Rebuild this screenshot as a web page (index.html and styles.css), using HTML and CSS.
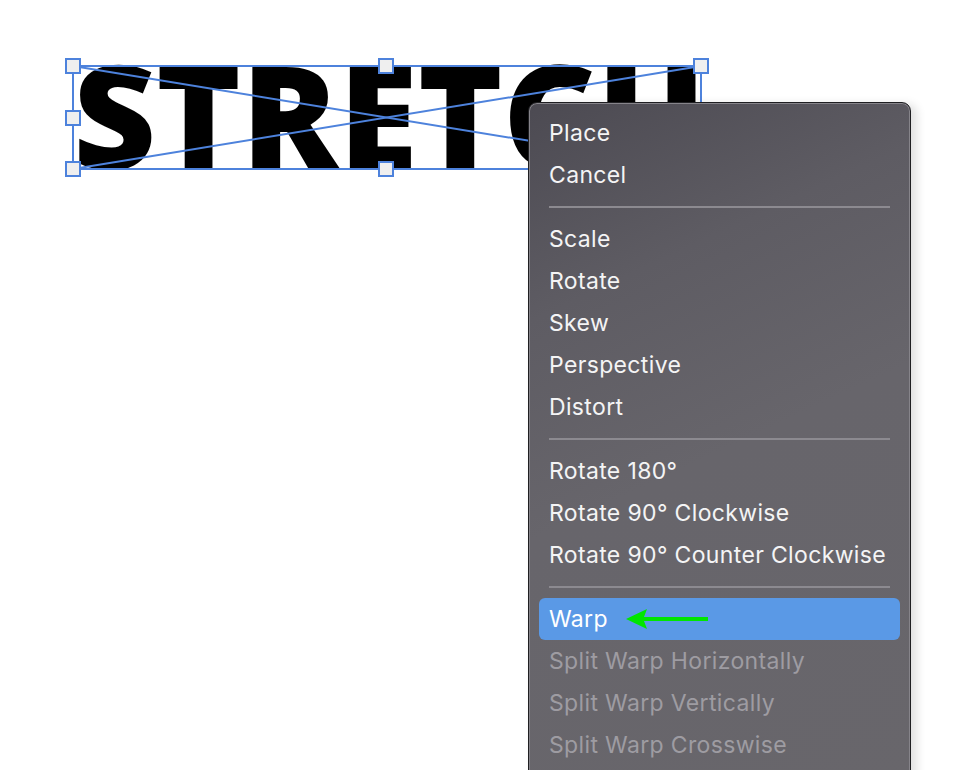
FILE: index.html
```html
<!DOCTYPE html>
<html lang="en">
<head>
    <meta charset="UTF-8">
    <title>Free Transform</title>
    <link rel="stylesheet" href="styles.css">
</head>
<body>
    <div id="stage">
        <div class="art">STRETCH</div>
        <svg class="bounds" width="958" height="200" viewBox="0 0 958 200">
            <rect class="edge" x="73" y="66" width="628" height="103"/>
            <line class="edge" x1="73" y1="66" x2="701" y2="169"/>
            <line class="edge" x1="73" y1="169" x2="701" y2="66"/>
            <rect class="handle" x="66" y="59" width="14" height="14"/>
            <rect class="handle" x="379" y="59" width="14" height="14"/>
            <rect class="handle" x="694" y="59" width="14" height="14"/>
            <rect class="handle" x="66" y="111" width="14" height="14"/>
            <rect class="handle" x="66" y="162" width="14" height="14"/>
            <rect class="handle" x="379" y="162" width="14" height="14"/>
        </svg>
        <div class="menu">
            <div class="item">Place</div>
            <div class="item">Cancel</div>
            <div class="sep"></div>
            <div class="item">Scale</div>
            <div class="item">Rotate</div>
            <div class="item">Skew</div>
            <div class="item">Perspective</div>
            <div class="item">Distort</div>
            <div class="sep"></div>
            <div class="item">Rotate 180°</div>
            <div class="item">Rotate 90° Clockwise</div>
            <div class="item">Rotate 90° Counter Clockwise</div>
            <div class="sep"></div>
            <div class="item active">Warp
                <svg class="arrow" width="84" height="22" viewBox="0 0 84 22">
                    <path d="M0 11 L21 1 L18 9 L82 9 L82 13 L18 13 L21 21 Z" fill="#00e600"/>
                </svg>
            </div>
            <div class="item off">Split Warp Horizontally</div>
            <div class="item off">Split Warp Vertically</div>
            <div class="item off">Split Warp Crosswise</div>
        </div>
    </div>
</body>
</html>
```

FILE: styles.css
```css
*{
    margin: 0;
    padding: 0;
    box-sizing: border-box;
}
body{
    background: #fff;
    font-family: Inter, "Noto Sans", sans-serif;
}
#stage{
    position: relative;
    width: 958px;
    height: 770px;
    overflow: hidden;
}
.art{
    position: absolute;
    left: 73px;
    top: 41px;
    font-family: "Open Sans", sans-serif;
    font-weight: 800;
    font-size: 144px;
    line-height: 1;
    color: #000;
    white-space: nowrap;
}
.bounds{
    position: absolute;
    left: 0;
    top: 0;
}
.edge{
    fill: none;
    stroke: #4d82dc;
    stroke-width: 2;
}
.handle{
    fill: #efefef;
    stroke: #4d82dc;
    stroke-width: 2;
}
.menu{
    position: absolute;
    left: 528px;
    top: 102px;
    width: 383px;
    height: 700px;
    padding: 9px 10px;
    border-radius: 9px;
    border: 1px solid #1f1f22;
    background: linear-gradient(155deg, #4c4a52 0%, #5e5c63 25%, #67656b 50%, #68666b 100%);
    box-shadow: inset 0 0 0 1px #86848a, 6px 2px 10px rgba(0,0,0,0.12);
}
.item{
    display: flex;
    align-items: center;
    height: 42px;
    padding-left: 10px;
    border-radius: 6px;
    font-size: 23px;
    letter-spacing: 0.35px;
    color: #f4f4f5;
    white-space: nowrap;
}
.item.active{
    background: #5a99e6;
    color: #fff;
}
.item.off{
    color: #9e9ca2;
}
.arrow{
    margin-left: 18px;
}
.sep{
    height: 2px;
    margin: 10px 10px;
    background: #8c8a90;
}
```
